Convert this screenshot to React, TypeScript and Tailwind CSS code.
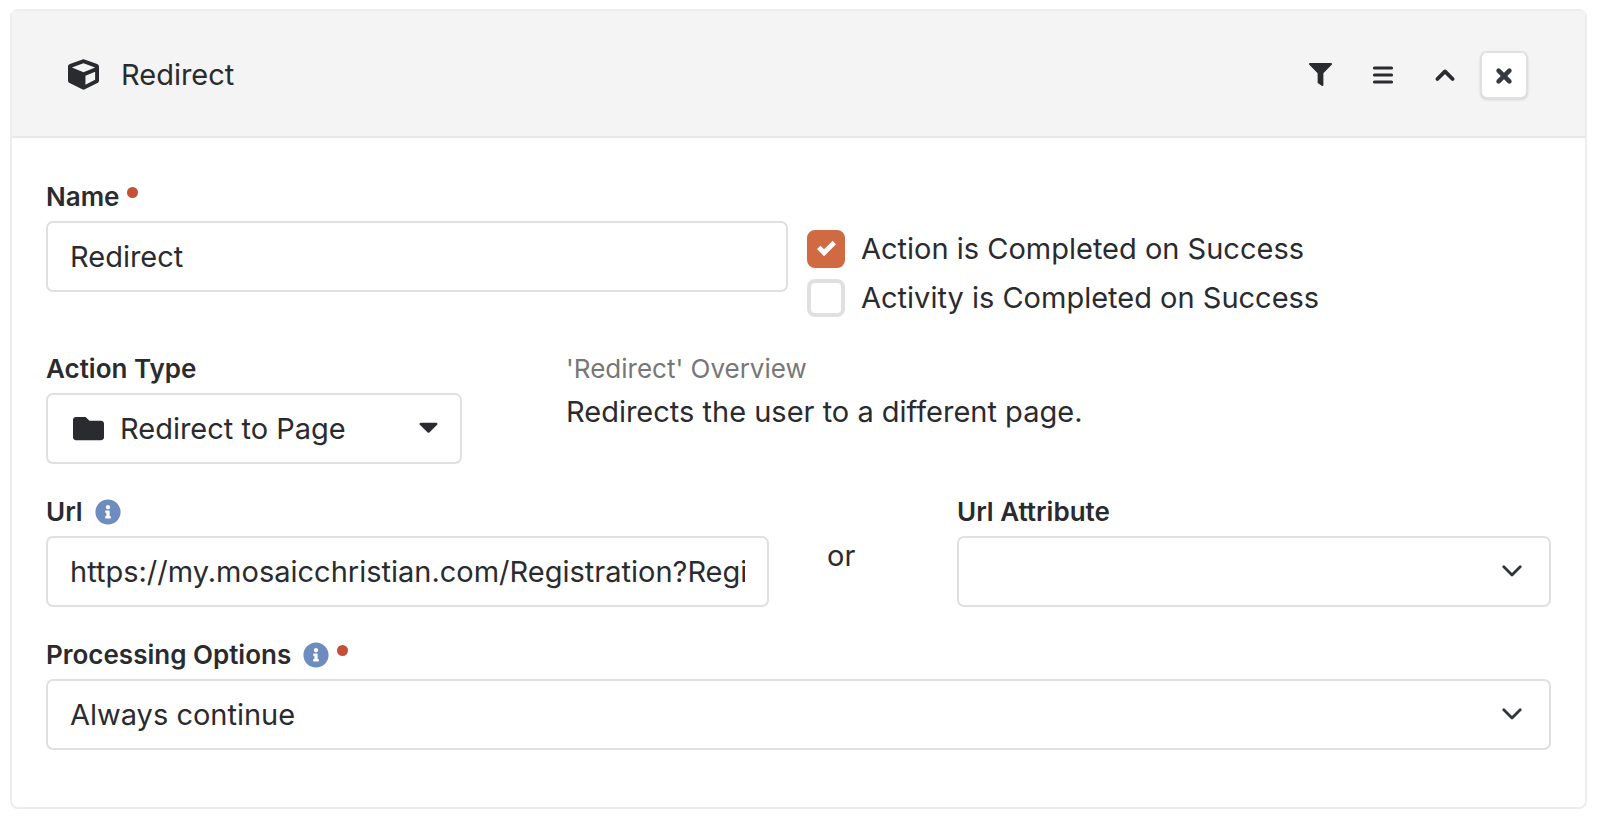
import { useId, type ReactNode } from "react";
import {
  FaCaretDown,
  FaCube,
  FaFilter,
  FaFolder,
  FaInfoCircle,
} from "react-icons/fa";

const controlClass =
  "h-[71px] w-full rounded-[7px] border-2 border-[#dfe0e1] bg-white pl-[22px] text-[#2a2b2f] outline-none focus:border-[#cf6a43]";

function StrokeIcon({ d, width }: { d: string; width: number }) {
  return (
    <svg
      aria-hidden="true"
      viewBox="0 0 24 24"
      className="size-6 fill-none stroke-current"
      strokeWidth={width}
      strokeLinecap="round"
      strokeLinejoin="round"
    >
      <path d={d} />
    </svg>
  );
}

function RequiredDot() {
  return <span aria-hidden="true" className="mb-2.5 ml-2 size-[11px] rounded-full bg-[#c64f38]" />;
}

function InfoIcon() {
  return <FaInfoCircle aria-hidden="true" className="ml-3 size-[26px] text-[#6f8cc0]" />;
}

function FieldLabel({ htmlFor, children }: { htmlFor: string; children: ReactNode }) {
  return (
    <label htmlFor={htmlFor} className="mb-2 flex items-center text-[26px] leading-8 font-semibold">
      {children}
    </label>
  );
}

function SelectBox({ id, options }: { id: string; options: string[] }) {
  return (
    <div className="relative">
      <select id={id} className={`${controlClass} appearance-none pr-[22px]`}>
        {options.map((option) => (
          <option key={option}>{option}</option>
        ))}
      </select>
      <svg
        aria-hidden="true"
        viewBox="0 0 20 12"
        className="pointer-events-none absolute top-[29px] right-[29px] h-3 w-5 fill-none stroke-[#30343b]"
        strokeWidth="2.8"
        strokeLinecap="round"
        strokeLinejoin="round"
      >
        <path d="M1.8 1.8 10 10l8.2-8.2" />
      </svg>
    </div>
  );
}

function CheckOption({ label, defaultChecked }: { label: string; defaultChecked?: boolean }) {
  const id = useId();
  return (
    <div className="flex h-[49px] items-center gap-4">
      <span className="grid size-[38px] shrink-0 place-items-center">
        <input
          id={id}
          type="checkbox"
          defaultChecked={defaultChecked}
          className="peer col-start-1 row-start-1 size-full appearance-none rounded-[8px] border-4 border-[#dfe0e1] bg-white checked:border-[#cf6a43] checked:bg-[#cf6a43]"
        />
        <svg
          aria-hidden="true"
          viewBox="0 0 8 8"
          className="pointer-events-none col-start-1 row-start-1 hidden size-[19px] fill-white peer-checked:block"
        >
          <path d="M6.564.75l-3.59 3.612-1.538-1.55L0 4.26l2.974 2.99L8 2.193z" />
        </svg>
      </span>
      <label htmlFor={id}>{label}</label>
    </div>
  );
}

export default function App() {
  return (
    <main className="bg-white pt-[9px] pr-[13px] pb-3 pl-[10px] font-['Inter',sans-serif] text-[29px] leading-9 text-[#2a2b2f]">
      <section className="rounded-lg border-2 border-[#ededee]">
        <header className="flex h-[127px] items-center border-b-2 border-[#e8e8e9] bg-[#f4f4f4] pt-0.5 pr-[57px] pl-14">
          <FaCube aria-hidden="true" className="size-[31px]" />
          <h1 className="ml-[22px] flex-1">Redirect</h1>
          <div className="flex items-center">
            <button type="button" aria-label="Filter" className="grid h-12 w-16 place-items-center">
              <FaFilter className="size-[23px]" />
            </button>
            <button type="button" aria-label="Reorder" className="grid h-12 w-[62px] place-items-center">
              <StrokeIcon d="M3.5 5h17M3.5 12h17M3.5 19h17" width={3.2} />
            </button>
            <button type="button" aria-label="Collapse" className="grid h-12 w-[62px] place-items-center">
              <StrokeIcon d="m4.4 16 7.6-7.6 7.6 7.6" width={3.8} />
            </button>
            <button
              type="button"
              aria-label="Remove"
              className="ml-1 grid size-12 place-items-center rounded-[7px] border-2 border-[#dfe0e1] bg-white text-[#363a41] shadow-sm"
            >
              <StrokeIcon d="m6.6 7.6 10.8 10.8M17.400 7.600 6.600 18.400" width={4.6} />
            </button>
          </div>
        </header>

        <form className="px-[34px] pt-[43px] pb-[57px]">
          <div className="mb-[31px] grid grid-cols-[742fr_744fr] gap-[19px]">
            <div>
              <FieldLabel htmlFor="name">
                Name <RequiredDot />
              </FieldLabel>
              <input id="name" type="text" defaultValue="Redirect" className={`${controlClass} pr-[22px]`} />
            </div>
            <div className="pt-[43px]">
              <CheckOption label="Action is Completed on Success" defaultChecked />
              <CheckOption label="Activity is Completed on Success" />
            </div>
          </div>

          <div className="mb-8 grid grid-cols-[416fr_985fr] gap-[104px]">
            <div>
              <FieldLabel htmlFor="action-type">Action Type</FieldLabel>
              <button id="action-type" type="button" className={`${controlClass} flex items-center pr-4 text-left`}>
                <FaFolder aria-hidden="true" className="ml-[3px] size-[31px]" />
                <span className="ml-4 flex-1">Redirect to Page</span>
                <FaCaretDown aria-hidden="true" className="mb-1 size-[31px]" />
              </button>
            </div>
            <div>
              <h2 className="mb-[9px] text-[26px] leading-8 text-[#777777]">'Redirect' Overview</h2>
              <p>Redirects the user to a different page.</p>
            </div>
          </div>

          <div className="mb-8 grid grid-cols-[723fr_188fr_594fr]">
            <div>
              <FieldLabel htmlFor="url">
                Url <InfoIcon />
              </FieldLabel>
              <input
                id="url"
                type="text"
                defaultValue="https://my.mosaicchristian.com/Registration?RegistrationInstanceId"
                className={`${controlClass} pr-[22px]`}
              />
            </div>
            <p className="pt-[42px] pl-[58px]">or</p>
            <div>
              <FieldLabel htmlFor="url-attribute">Url Attribute</FieldLabel>
              <SelectBox id="url-attribute" options={[""]} />
            </div>
          </div>

          <div>
            <FieldLabel htmlFor="processing">
              Processing Options <InfoIcon /> <RequiredDot />
            </FieldLabel>
            <SelectBox id="processing" options={["Always continue"]} />
          </div>
        </form>
      </section>
    </main>
  );
}
